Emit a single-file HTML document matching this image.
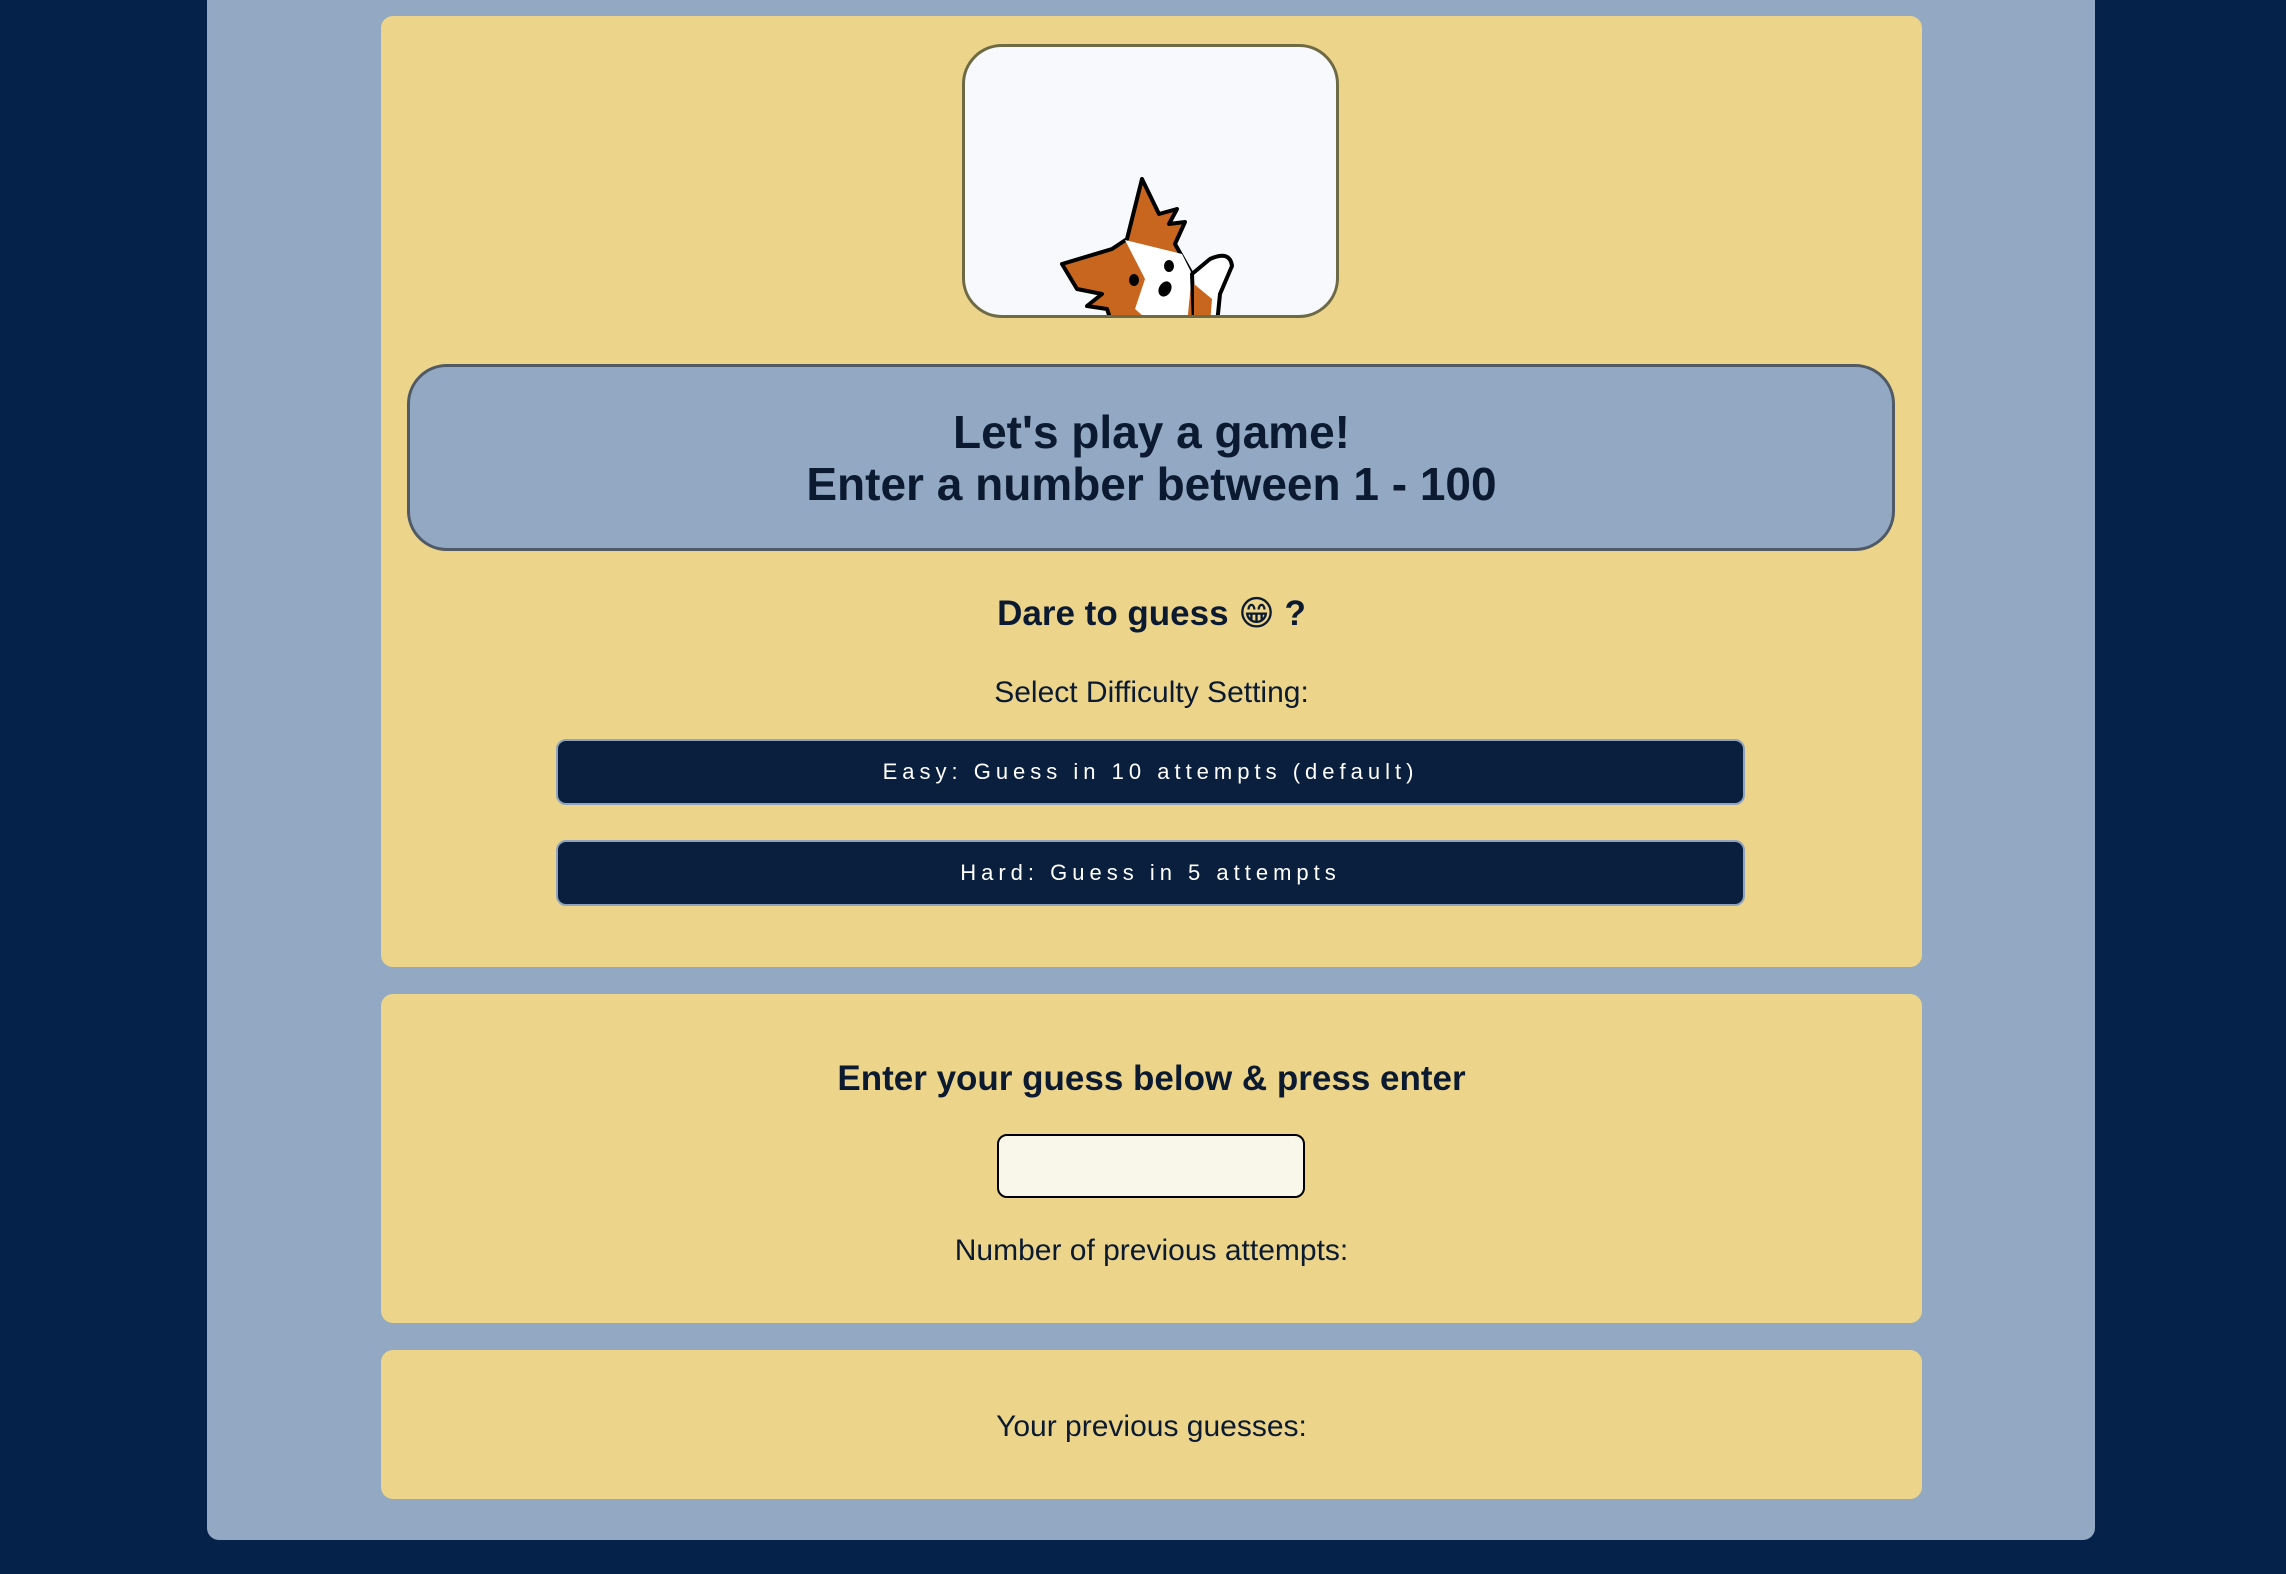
<!DOCTYPE html>
<html><head><meta charset="utf-8"><style>
body{margin:0;width:2286px;height:1574px;background:#05224a;font-family:"Liberation Sans","DejaVu Sans",sans-serif;color:#0b1a30;position:relative;overflow:hidden}
.panel{position:absolute;left:207px;top:-20px;width:1888px;height:1560px;background:#93a8c2;border-radius:12px}
.card{position:absolute;left:381px;width:1541px;background:#ecd58b;border-radius:12px}
.c{position:absolute;left:381px;width:1541px;text-align:center}
.btn{position:absolute;left:556px;width:1189px;height:66px;background:#0a1f3e;border:2px solid #8fa3bd;border-radius:10px;box-sizing:border-box;color:#fff;font-size:22px;letter-spacing:5px;text-align:center;line-height:62px}
</style></head><body>
<div class="panel"></div>
<div class="card" style="top:16px;height:951px"></div>
<div class="card" style="top:994px;height:329px"></div>
<div class="card" style="top:1350px;height:149px"></div>
<div style="position:absolute;left:962px;top:44px;width:377px;height:274px;box-sizing:border-box;border:3px solid #6e6a45;border-radius:40px;background:#f7f9fc;overflow:hidden">
<svg width="377" height="274" viewBox="0 0 377 274" style="position:absolute;left:-3px;top:-3px">
<g stroke="#000" stroke-width="4" stroke-linejoin="round">
<path d="M100 220 L150 205 L165 195 L180 135 L197 170 L215 165 L207 180 L223 178 L213 200 L230 230 L235 280 L150 280 L145 265 L125 262 L140 250 L115 245 Z" fill="#c8651e"/>
<path d="M163 196 L183 235 L173 265 L190 280 L225 280 L230 230 L220 210 Z" fill="#fff" stroke="none"/>
<path d="M230 230 L248 215 Q268 206 270 222 L258 250 L255 280 L232 280 Z" fill="#fff"/>
<path d="M232 240 L250 255 L248 280 L232 280 Z" fill="#c8651e" stroke="none"/>
</g>
<ellipse cx="172" cy="236" rx="5" ry="6"/><ellipse cx="207" cy="222" rx="5" ry="6"/><ellipse cx="203" cy="245" rx="6" ry="8" transform="rotate(30 203 245)"/>
</svg></div>
<div style="position:absolute;left:407px;top:364px;width:1488px;height:187px;box-sizing:border-box;border:3px solid #4f5a66;border-radius:40px;background:#93a8c2"></div>
<div class="c" style="top:406px;font-size:46px;font-weight:bold;line-height:52px;color:#0b1a30">Let's play a game!<br>Enter a number between 1 - 100</div>
<div class="c" style="top:594px;font-size:35px;font-weight:bold">Dare to guess 😁 ?</div>
<div class="c" style="top:676px;font-size:30px">Select Difficulty Setting:</div>
<div class="btn" style="top:739px">Easy: Guess in 10 attempts (default)</div>
<div class="btn" style="top:840px">Hard: Guess in 5 attempts</div>
<div class="c" style="top:1059px;font-size:35px;font-weight:bold">Enter your guess below &amp; press enter</div>
<div style="position:absolute;left:997px;top:1134px;width:308px;height:64px;box-sizing:border-box;border:2px solid #000;border-radius:10px;background:#f9f7ea"></div>
<div class="c" style="top:1234px;font-size:30px">Number of previous attempts:</div>
<div class="c" style="top:1410px;font-size:30px">Your previous guesses:</div>
</body></html>
